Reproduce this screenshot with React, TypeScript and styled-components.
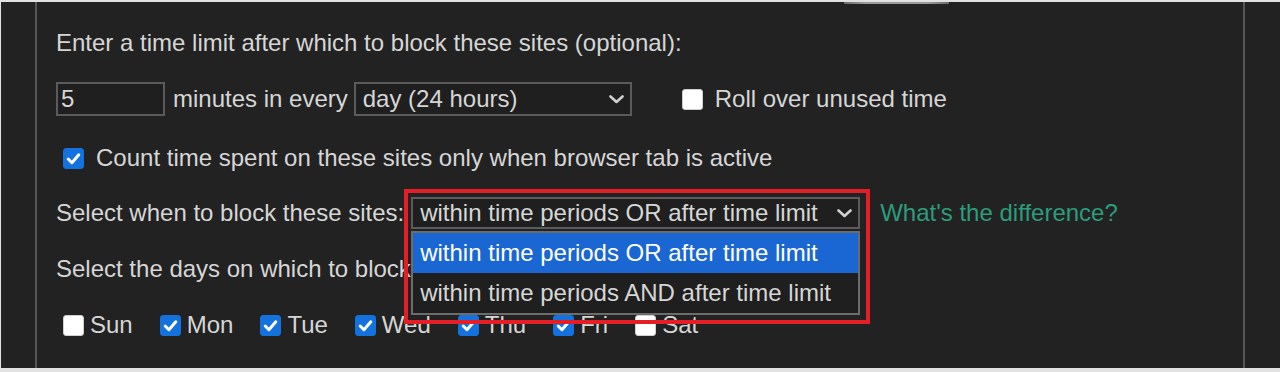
import React from "react";
import styled, { createGlobalStyle } from "styled-components";

const GlobalStyle = createGlobalStyle`
  html, body {
    margin: 0;
    padding: 0;
    background: #e2e2e2;
  }
  body {
    font-family: "Liberation Sans", Arial, sans-serif;
  }
`;

const Frame = styled.div`
  width: 1280px;
  height: 372px;
  box-sizing: border-box;
  padding: 2px 0 4px 1px;
  overflow: hidden;
`;

const Panel = styled.div`
  height: 100%;
  background: #222222;
  padding-left: 34px;
`;

const Section = styled.div`
  box-sizing: border-box;
  width: 1210px;
  height: 100%;
  border-left: 2px solid #555555;
  border-right: 2px solid #555555;
  padding-left: 19px;
  display: flex;
  flex-direction: column;
  color: #d6d6d6;
  font-size: 24px;
`;

/* bottom edge of the button that sits above this section */
const Ledge = styled.div`
  margin-left: 788px;
  width: 105px;
  height: 2px;
  background: linear-gradient(90deg, #6a6a6a, #9a9a9a 20%, #9a9a9a 80%, #6a6a6a);
`;

const Row = styled.div<{ $gap: number }>`
  display: flex;
  align-items: center;
  height: 32px;
  margin-top: ${(p) => p.$gap}px;
  white-space: nowrap;
`;

const TextInput = styled.div`
  box-sizing: border-box;
  width: 109px;
  height: 34px;
  border: 2px solid #5b5b5b;
  background: #1f1f1f;
  padding-left: 3px;
  display: flex;
  align-items: center;
  margin-right: 8px;
  flex: none;
`;

const SelectWrap = styled.div<{ $left: number }>`
  position: relative;
  margin-left: ${(p) => p.$left}px;
  flex: none;
`;

const SelectBox = styled.div<{ $width: number; $height: number }>`
  box-sizing: border-box;
  width: ${(p) => p.$width}px;
  height: ${(p) => p.$height}px;
  border: 2px solid #5b5b5b;
  background: #1f1f1f;
  padding: 0 6px 0 7px;
  display: flex;
  align-items: center;
  justify-content: space-between;
`;

const Chevron = () => (
  <svg width="15" height="9" viewBox="0 0 15 9">
    <path
      d="M1.5 1.5 L7.5 7 L13.5 1.5"
      fill="none"
      stroke="#d0d0d0"
      strokeWidth="2.6"
      strokeLinecap="round"
      strokeLinejoin="round"
    />
  </svg>
);

const OptionList = styled.div`
  position: absolute;
  left: 0;
  top: calc(100% + 2px);
  box-sizing: border-box;
  width: 100%;
  border: 2px solid #6c6c6c;
  background: #1f1f1f;
  z-index: 2;
`;

const Option = styled.div<{ $active?: boolean }>`
  height: 40px;
  display: flex;
  align-items: center;
  padding-left: 7px;
  background: ${(p) => (p.$active ? "#1a66d2" : "transparent")};
  color: ${(p) => (p.$active ? "#ffffff" : "#d6d6d6")};
`;

const Highlight = styled.div`
  position: absolute;
  left: -7px;
  top: -8px;
  width: 466px;
  height: 135px;
  box-sizing: border-box;
  border: 4px solid #e31e26;
  z-index: 3;
  pointer-events: none;
`;

const CheckLabel = styled.label<{ $indent?: number; $gap: number; $after?: number }>`
  display: flex;
  align-items: center;
  gap: ${(p) => p.$gap}px;
  margin-left: ${(p) => p.$indent || 0}px;
  margin-right: ${(p) => p.$after || 0}px;
`;

const Box = styled.span<{ $checked: boolean }>`
  box-sizing: border-box;
  width: 21px;
  height: 21px;
  border-radius: 3px;
  flex: none;
  display: inline-flex;
  align-items: center;
  justify-content: center;
  background: ${(p) => (p.$checked ? "#1372dd" : "#ffffff")};
  border: 1px solid ${(p) => (p.$checked ? "#1372dd" : "#cfcfcf")};
`;

const Checkbox: React.FC<{ checked: boolean }> = ({ checked }) => (
  <Box $checked={checked}>
    {checked ? (
      <svg width="17" height="17" viewBox="0 0 16 16">
        <path
          d="M3 8.5 L6.5 12 L13 4.5"
          fill="none"
          stroke="#ffffff"
          strokeWidth="2.8"
          strokeLinecap="round"
          strokeLinejoin="round"
        />
      </svg>
    ) : null}
  </Box>
);

const HelpLink = styled.a`
  margin-left: 20px;
  color: #2d9c7c;
  text-decoration: none;
`;

const DAYS: [string, boolean][] = [
  ["Sun", false],
  ["Mon", true],
  ["Tue", true],
  ["Wed", true],
  ["Thu", true],
  ["Fri", true],
  ["Sat", false],
];

const App: React.FC = () => {
  return (
    <>
      <GlobalStyle />
      <Frame>
        <Panel>
          <Section>
            <Ledge />
            <Row $gap={23}>
              Enter a time limit after which to block these sites (optional):
            </Row>
            <Row $gap={24}>
              <TextInput>5</TextInput>
              minutes in every
              <SelectWrap $left={6}>
                <SelectBox $width={278} $height={34}>
                  day (24 hours)
                  <Chevron />
                </SelectBox>
              </SelectWrap>
              <CheckLabel $indent={50} $gap={12}>
                <Checkbox checked={false} />
                Roll over unused time
              </CheckLabel>
            </Row>
            <Row $gap={27}>
              <CheckLabel $indent={7} $gap={12}>
                <Checkbox checked />
                Count time spent on these sites only when browser tab is active
              </CheckLabel>
            </Row>
            <Row $gap={23}>
              Select when to block these sites:
              <SelectWrap $left={7}>
                <SelectBox $width={449} $height={32}>
                  within time periods OR after time limit
                  <Chevron />
                </SelectBox>
                <OptionList>
                  <Option $active>within time periods OR after time limit</Option>
                  <Option>within time periods AND after time limit</Option>
                </OptionList>
                <Highlight />
              </SelectWrap>
              <HelpLink href="#">What's the difference?</HelpLink>
            </Row>
            <Row $gap={24}>Select the days on which to block these sites:</Row>
            <Row $gap={24}>
              {DAYS.map(([day, checked], index) => (
                <CheckLabel
                  key={day}
                  $indent={index === 0 ? 7 : 0}
                  $gap={6}
                  $after={27}
                >
                  <Checkbox checked={checked} />
                  {day}
                </CheckLabel>
              ))}
            </Row>
          </Section>
        </Panel>
      </Frame>
    </>
  );
};

export default App;
